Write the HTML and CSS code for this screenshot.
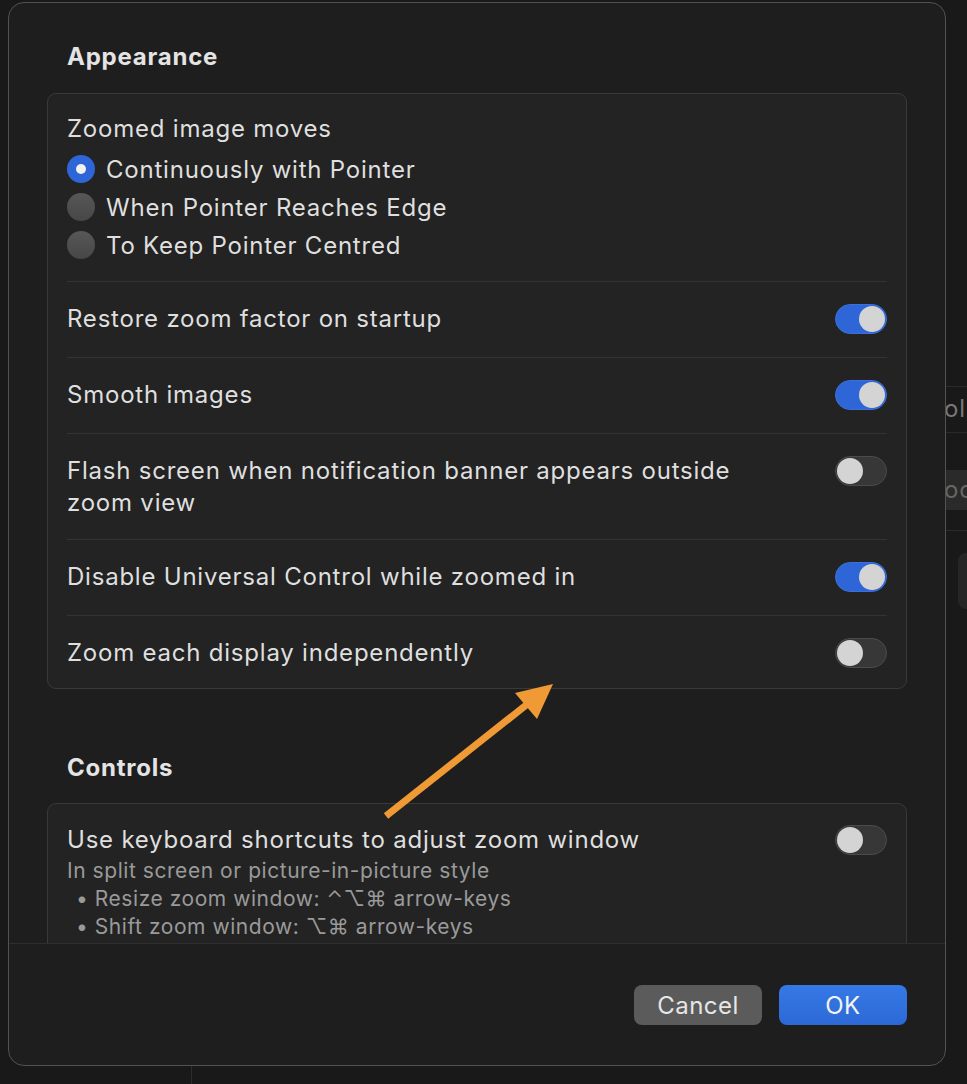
FILE: index.html
```html
<!DOCTYPE html>
<html lang="en">
<head>
    <meta charset="UTF-8">
    <meta name="viewport" content="width=device-width, initial-scale=1.0">
    <title>Zoom Options</title>
    <link rel="stylesheet" href="styles.css">
</head>
<body>
    <div class="fondo">
        <div class="fondo-linea l1"></div>
        <div class="fondo-linea l2"></div>
        <div class="fondo-linea l3"></div>
        <div class="fondo-texto t1">ol</div>
        <div class="fondo-caja">oo</div>
        <div class="fondo-boton"></div>
        <div class="fondo-vertical"></div>
    </div>

    <div class="dialogo">
        <div class="contenido">
            <h2 class="titulo">Appearance</h2>
            <div class="grupo">
                <div class="radios">
                    <div class="etiqueta">Zoomed image moves</div>
                    <div class="radio"><span class="circulo activo"></span>Continuously with Pointer</div>
                    <div class="radio"><span class="circulo"></span>When Pointer Reaches Edge</div>
                    <div class="radio"><span class="circulo"></span>To Keep Pointer Centred</div>
                </div>
                <div class="fila">
                    <span class="texto">Restore zoom factor on startup</span>
                    <span class="interruptor on"></span>
                </div>
                <div class="fila">
                    <span class="texto">Smooth images</span>
                    <span class="interruptor on"></span>
                </div>
                <div class="fila doble">
                    <span class="texto">Flash screen when notification banner appears outside<br>zoom view</span>
                    <span class="interruptor"></span>
                </div>
                <div class="fila">
                    <span class="texto">Disable Universal Control while zoomed in</span>
                    <span class="interruptor on"></span>
                </div>
                <div class="fila ultima">
                    <span class="texto">Zoom each display independently</span>
                    <span class="interruptor"></span>
                </div>
            </div>

            <h2 class="titulo controles">Controls</h2>
            <div class="grupo">
                <div class="fila primera">
                    <div class="texto">
                        <div>Use keyboard shortcuts to adjust zoom window</div>
                        <div class="ayuda sub">In split screen or picture-in-picture style</div>
                        <div class="ayuda punto">• Resize zoom window: ⌃⌥⌘ arrow-keys</div>
                        <div class="ayuda punto">• Shift zoom window: ⌥⌘ arrow-keys</div>
                        <div class="ayuda">&nbsp;</div>
                    </div>
                    <span class="interruptor"></span>
                </div>
            </div>
        </div>
        <div class="pie">
            <button class="boton">Cancel</button>
            <button class="boton principal">OK</button>
        </div>
    </div>

    <svg class="flecha" width="967" height="1084" viewBox="0 0 967 1084">
        <line x1="386" y1="816" x2="530" y2="702" stroke="#f09a36" stroke-width="7" stroke-linecap="butt"/>
        <polygon points="553,684 537,719 515,693" fill="#f09a36"/>
    </svg>
</body>
</html>
```

FILE: styles.css
```css
body {
    margin: 0;
    background-color: #161616;
    font-family: Inter, "Noto Sans", sans-serif;
    letter-spacing: 0.78px;
    color: #dfdfdf;
    width: 967px;
    height: 1084px;
    overflow: hidden;
    position: relative;
}

/* ventana de atras */
.fondo {
    position: absolute;
    inset: 0;
    background-color: #191919;
}

.fondo-linea {
    position: absolute;
    left: 940px;
    width: 40px;
    height: 1px;
    background-color: #2a2a2a;
}

.l1 { top: 386px; }
.l2 { top: 432px; }
.l3 { top: 530px; }

.fondo-texto {
    position: absolute;
    left: 944px;
    top: 394px;
    font-size: 24px;
    color: #777;
}

.fondo-caja {
    position: absolute;
    left: 940px;
    top: 470px;
    width: 40px;
    height: 40px;
    background-color: #2a2a2a;
    color: #666;
    font-size: 24px;
    line-height: 40px;
    text-indent: 4px;
}

.fondo-boton {
    position: absolute;
    left: 958px;
    top: 553px;
    width: 30px;
    height: 56px;
    border-radius: 8px;
    background-color: #262626;
}

.fondo-vertical {
    position: absolute;
    left: 191px;
    top: 1060px;
    width: 1px;
    height: 30px;
    background-color: #2c2c2c;
}

/* dialogo */
.dialogo {
    position: relative;
    margin: 2px 0 0 8px;
    width: 936px;
    height: 1062px;
    background-color: #1e1e1e;
    border: 1px solid #525252;
    border-radius: 16px;
    display: flex;
    flex-direction: column;
    overflow: hidden;
}

.contenido {
    height: 941px;
    overflow: hidden;
    padding: 39px 38px 0;
    box-sizing: border-box;
    border-bottom: 1px solid #2e2e2e;
}

.titulo {
    margin: 0 0 21px 20px;
    font-size: 24px;
    line-height: 30px;
    font-weight: 700;
    color: #e4e4e4;
}

.controles {
    margin-top: 64px;
    margin-bottom: 20px;
}

.grupo {
    background-color: #232323;
    border: 1px solid #393939;
    border-radius: 9px;
}

.radios {
    padding: 20px 19px 17px;
    font-size: 24px;
}

.etiqueta {
    line-height: 30px;
    margin-bottom: 6px;
}

.radio {
    display: flex;
    align-items: center;
    gap: 11px;
    height: 38px;
}

.circulo {
    width: 28px;
    height: 28px;
    border-radius: 50%;
    background: linear-gradient(#575757, #474747);
    box-sizing: border-box;
    display: flex;
    align-items: center;
    justify-content: center;
}

.circulo.activo {
    background: #2e66d8;
}

.circulo.activo::after {
    content: "";
    width: 10px;
    height: 10px;
    border-radius: 50%;
    background-color: #f2f2f2;
}

.fila {
    display: flex;
    justify-content: space-between;
    align-items: flex-start;
    margin: 0 19px;
    padding: 21px 0 22px;
    border-top: 1px solid #333;
    font-size: 24px;
    line-height: 32px;
}

.fila.doble {
    padding-bottom: 20px;
}

.fila.ultima {
    padding-bottom: 19px;
}

.fila.primera {
    border-top: none;
    padding-top: 20px;
}

.ayuda {
    font-size: 21px;
    line-height: 28px;
    letter-spacing: 0.55px;
    color: #9a9a9a;
}

.ayuda.sub {
    margin-top: 1px;
}

.punto {
    padding-left: 9px;
}

.interruptor {
    flex: none;
    position: relative;
    width: 52px;
    height: 30px;
    margin-top: 1px;
    border-radius: 15px;
    background-color: #373737;
    border: 1px solid #4b4b4b;
    box-sizing: border-box;
}

.interruptor::after {
    content: "";
    position: absolute;
    top: 1px;
    left: 1px;
    width: 26px;
    height: 26px;
    border-radius: 50%;
    background-color: #d4d4d4;
}

.interruptor.on {
    background-color: #2e66d8;
    border-color: #3b6fd9;
}

.interruptor.on::after {
    left: 23px;
}

.pie {
    flex: 1;
    display: flex;
    justify-content: flex-end;
    gap: 17px;
    padding: 41px 38px 0 0;
    box-sizing: border-box;
}

.boton {
    width: 128px;
    height: 40px;
    border: none;
    border-radius: 8px;
    background-color: #5b5b5b;
    color: #e6e6e6;
    font-family: Inter, "Noto Sans", sans-serif;
    font-size: 24px;
    letter-spacing: 0.5px;
    padding: 0;
}

.boton.principal {
    background: linear-gradient(#3579e6, #2d69d6);
    color: #f4f4f4;
}

.flecha {
    position: absolute;
    left: 0;
    top: 0;
    pointer-events: none;
}
```
